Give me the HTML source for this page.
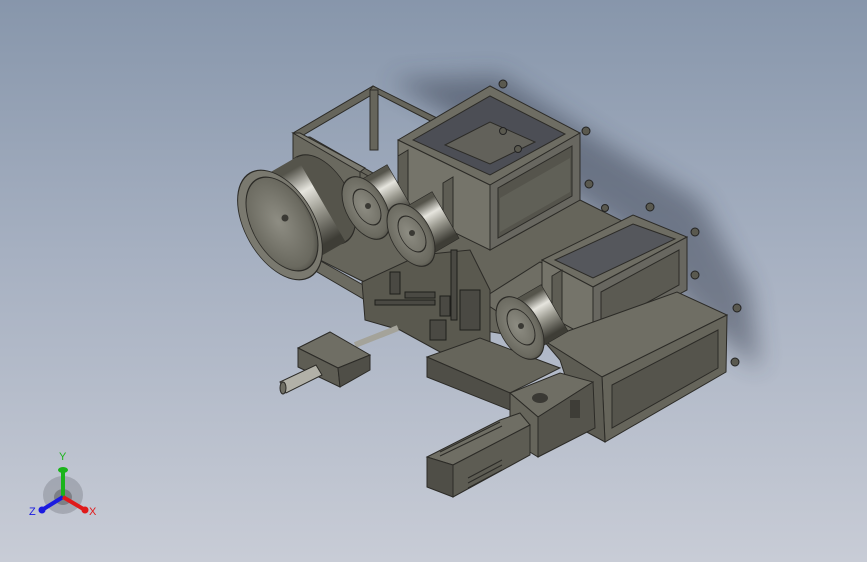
<!DOCTYPE html>
<html><head><style>
html,body{margin:0;padding:0;width:867px;height:562px;overflow:hidden}
body{background:linear-gradient(180deg,#8796ab 0%,#a6b0c1 45%,#c8ccd6 100%)}
svg{position:absolute;left:0;top:0}
</style></head><body>
<svg width="867" height="562" viewBox="0 0 867 562" xmlns="http://www.w3.org/2000/svg" font-family="Liberation Sans, sans-serif">
<defs>
<linearGradient id="g1" gradientUnits="userSpaceOnUse" x1="262" y1="187" x2="302" y2="257"><stop offset="0" stop-color="#55544b"/><stop offset="0.3" stop-color="#e6e5de"/><stop offset="0.6" stop-color="#9a998f"/><stop offset="1" stop-color="#3e3d36"/></linearGradient>
<linearGradient id="g2" gradientUnits="userSpaceOnUse" x1="372" y1="179" x2="394" y2="217"><stop offset="0" stop-color="#55544b"/><stop offset="0.3" stop-color="#e6e5de"/><stop offset="0.6" stop-color="#9a998f"/><stop offset="1" stop-color="#3e3d36"/></linearGradient>
<linearGradient id="g3" gradientUnits="userSpaceOnUse" x1="417" y1="206" x2="439" y2="244"><stop offset="0" stop-color="#55544b"/><stop offset="0.3" stop-color="#e6e5de"/><stop offset="0.6" stop-color="#9a998f"/><stop offset="1" stop-color="#3e3d36"/></linearGradient>
<linearGradient id="g4" gradientUnits="userSpaceOnUse" x1="526" y1="299" x2="548" y2="337"><stop offset="0" stop-color="#55544b"/><stop offset="0.3" stop-color="#e6e5de"/><stop offset="0.6" stop-color="#9a998f"/><stop offset="1" stop-color="#3e3d36"/></linearGradient>
<radialGradient id="disc" cx="0.45" cy="0.5" r="0.6"><stop offset="0" stop-color="#8e8d83"/><stop offset="0.8" stop-color="#6a695f"/><stop offset="1" stop-color="#45443d"/></radialGradient>
<filter id="sh"><feGaussianBlur stdDeviation="12"/></filter>
</defs>
<polygon points="390,80 500,75 600,140 700,200 750,290 760,370 700,320 620,230 520,160" fill="#2e3545" opacity="0.45" filter="url(#sh)"/>
<polygon points="355,165 490,250 580,200 640,230 600,290 560,320 540,340 480,330 360,280 300,250" fill="#66655b" stroke="#2c2b27"/>
<polygon points="480,300 540,262 600,290 593,340 540,340" fill="#6f6e64" stroke="#2c2b27"/>
<g stroke="#2c2b27" stroke-width="1" fill="#66655b">
<polygon points="293,133 373,86 380,90 300,137"/>
<polygon points="373,86 445,122 440,126 370,90"/>
<polygon points="370,90 378,90 378,150 370,150"/>
<polygon points="300,137 310,137 380,177 370,177"/>
</g>
<polygon points="293,133 360,170 360,215 293,180" fill="#6a695f" stroke="#2c2b27"/>
<polygon points="293,133 300,133 365,168 360,172" fill="#7a796f" stroke="#2c2b27"/>
<polygon points="398,140 490,86 580,133 490,185" fill="#6e6d63" stroke="#2c2b27"/>
<polygon points="413,140 490,96 565,134 490,175" fill="#4c4e55" stroke="#2c2b27"/>
<polygon points="445,145 490,122 535,142 490,164" fill="#62615a" stroke="#2c2b27"/>
<polygon points="490,185 580,133 580,200 490,250" fill="#686760" stroke="#2c2b27"/>
<polygon points="498,188 572,146 572,196 498,238" fill="#55544c" stroke="#2c2b27"/>
<polygon points="500,198 570,158 570,192 500,232" fill="#606057"/>
<polygon points="398,140 490,185 490,250 398,205" fill="#75746a" stroke="#2c2b27"/>
<polygon points="542,260 633,215 687,237 593,287" fill="#6e6d63" stroke="#2c2b27"/>
<polygon points="555,260 633,224 675,239 593,278" fill="#55575c" stroke="#2c2b27"/>
<polygon points="593,287 687,237 687,290 593,340" fill="#686760" stroke="#2c2b27"/>
<polygon points="601,292 679,250 679,285 601,328" fill="#5b5a52" stroke="#2c2b27"/>
<polygon points="542,260 593,287 593,340 542,312" fill="#75746a" stroke="#2c2b27"/>
<polygon points="543,340 677,292 727,315 602,377" fill="#6f6e64" stroke="#2c2b27"/>
<polygon points="602,377 727,315 726,372 605,442" fill="#66655b" stroke="#2c2b27"/>
<polygon points="612,385 718,330 718,368 612,428" fill="#55544c" stroke="#2c2b27"/>
<polygon points="543,340 602,377 605,442 583,430 560,360" fill="#5d5c53" stroke="#2c2b27"/>
<polygon points="300,262 310,255 372,290 365,300" fill="#6c6b61" stroke="#2c2b27"/>
<polygon points="362,282 420,255 470,250 490,290 490,350 440,352 400,330 365,320" fill="#5a594f" stroke="#2c2b27"/>
<g stroke="#1e1e1b" stroke-width="1" fill="#4a4943">
<rect x="390" y="272" width="10" height="22"/><rect x="440" y="296" width="10" height="20"/><rect x="451" y="250" width="6" height="70"/><rect x="405" y="292" width="30" height="6"/><rect x="375" y="300" width="60" height="5"/><rect x="460" y="290" width="20" height="40"/><rect x="430" y="320" width="16" height="20"/>
</g>
<polygon points="427,357 480,338 560,368 510,393" fill="#66655b" stroke="#2c2b27"/>
<polygon points="427,357 510,393 510,410 427,377" fill="#4f4e47" stroke="#2c2b27"/>
<polygon points="510,393 560,373 593,382 538,417" fill="#6f6e64" stroke="#2c2b27"/>
<polygon points="538,417 593,382 595,428 538,457" fill="#55544c" stroke="#2c2b27"/>
<polygon points="510,393 538,417 538,457 510,440" fill="#66655b" stroke="#2c2b27"/>
<ellipse cx="540" cy="398" rx="8" ry="5" fill="#3a3934"/>
<rect x="570" y="400" width="10" height="18" fill="#3e3d37"/>
<polygon points="427,457 500,420 520,413 530,425 453,465" fill="#6f6e64" stroke="#2c2b27"/>
<polygon points="427,457 453,465 453,497 427,487" fill="#4f4e47" stroke="#2c2b27"/>
<polygon points="453,465 530,425 530,455 453,497" fill="#5d5c53" stroke="#2c2b27"/>
<g stroke="#2c2b27"><line x1="468" y1="478" x2="502" y2="460"/><line x1="468" y1="483" x2="502" y2="465"/><line x1="468" y1="488" x2="502" y2="470"/><line x1="440" y1="452" x2="500" y2="422"/><line x1="440" y1="456" x2="502" y2="426"/></g>
<line x1="355" y1="345" x2="398" y2="328" stroke="#a4a39a" stroke-width="6"/>
<polygon points="298,348 330,332 370,355 338,368" fill="#6f6e64" stroke="#2c2b27"/>
<polygon points="298,348 338,368 340,387 298,367" fill="#5e5d54" stroke="#2c2b27"/>
<polygon points="338,368 370,355 370,370 340,387" fill="#4f4e47" stroke="#2c2b27"/>
<polygon points="280,382 316,365 322,375 286,393" fill="#b2b1a8" stroke="#2c2b27"/>
<ellipse cx="283" cy="388" rx="3" ry="6" fill="#6f6e64" stroke="#2c2b27"/>
<!-- big drum -->
<ellipse transform="translate(321,199.5) skewY(30)" rx="34.6" ry="40" fill="#55544b" stroke="#2c2b27"/>
<polygon points="306.5,264.4 257.5,179.6 296.5,157.1 345.5,241.9" fill="url(#g1)"/>
<ellipse transform="translate(280,225) skewY(30)" rx="42.4" ry="49" fill="#7a796f" stroke="#2c2b27"/>
<ellipse transform="translate(282,224) skewY(30)" rx="36" ry="42" fill="url(#disc)" stroke="#2c2b27"/>
<circle cx="285" cy="218" r="3.5" fill="#3a3934"/>
<!-- drum 2 -->
<polygon transform="translate(403,186)" points="-5,-30 5,-36 5,26 -5,32" fill="#5e5d54" stroke="#2c2b27"/>
<polygon points="379.5,231.3 352.5,184.7 387.1,164.7 414.1,211.3" fill="url(#g2)" stroke="#2c2b27" stroke-width="0.6"/>
<ellipse transform="translate(366,208) skewY(30)" rx="24" ry="28" fill="url(#disc)" stroke="#2c2b27"/>
<ellipse transform="translate(367,207) skewY(30)" rx="14" ry="16" fill="none" stroke="#2c2b27"/>
<circle cx="368" cy="206" r="3" fill="#3a3934"/>
<!-- drum 3 -->
<polygon transform="translate(448,213)" points="-5,-30 5,-36 5,26 -5,32" fill="#5e5d54" stroke="#2c2b27"/>
<polygon points="424.5,258.3 397.5,211.7 432.1,191.7 459.1,238.3" fill="url(#g3)" stroke="#2c2b27" stroke-width="0.6"/>
<ellipse transform="translate(411,235) skewY(30)" rx="24" ry="28" fill="url(#disc)" stroke="#2c2b27"/>
<ellipse transform="translate(412,234) skewY(30)" rx="14" ry="16" fill="none" stroke="#2c2b27"/>
<circle cx="412" cy="233" r="3" fill="#3a3934"/>
<!-- drum 4 -->
<polygon transform="translate(557,306)" points="-5,-30 5,-36 5,26 -5,32" fill="#5e5d54" stroke="#2c2b27"/>
<polygon points="533.5,351.3 506.5,304.7 541.1,284.7 568.1,331.3" fill="url(#g4)" stroke="#2c2b27" stroke-width="0.6"/>
<ellipse transform="translate(520,328) skewY(30)" rx="24" ry="28" fill="url(#disc)" stroke="#2c2b27"/>
<ellipse transform="translate(521,327) skewY(30)" rx="14" ry="16" fill="none" stroke="#2c2b27"/>
<circle cx="521" cy="326" r="3" fill="#3a3934"/>
<g fill="#5a594f" stroke="#222">
<circle cx="503" cy="84" r="4"/><circle cx="586" cy="131" r="4"/><circle cx="503" cy="131" r="3.5"/><circle cx="518" cy="149" r="3.5"/><circle cx="589" cy="184" r="4"/><circle cx="650" cy="207" r="4"/><circle cx="695" cy="232" r="4"/><circle cx="695" cy="275" r="4"/><circle cx="737" cy="308" r="4"/><circle cx="735" cy="362" r="4"/><circle cx="605" cy="208" r="3.5"/>
</g>
<ellipse cx="63" cy="495" rx="20" ry="19" fill="#6d7078" opacity="0.35"/>
<ellipse cx="63" cy="497" rx="9" ry="8" fill="#444" opacity="0.4"/>
<line x1="63" y1="497" x2="63" y2="469" stroke="#1ab41a" stroke-width="4"/>
<ellipse cx="63" cy="470" rx="5" ry="3" fill="#1ab41a"/>
<line x1="63" y1="497" x2="42" y2="510" stroke="#1a1ae0" stroke-width="4"/>
<circle cx="42" cy="510" r="3.5" fill="#1a1ae0"/>
<line x1="63" y1="497" x2="85" y2="510" stroke="#e01a1a" stroke-width="4"/>
<circle cx="85" cy="510" r="3.5" fill="#e01a1a"/>
<text x="59" y="460" font-size="11" fill="#1ab41a">Y</text>
<text x="29" y="515" font-size="11" fill="#1a1ae0">Z</text>
<text x="89" y="515" font-size="11" fill="#e01a1a">X</text>
</svg>
</body></html>
